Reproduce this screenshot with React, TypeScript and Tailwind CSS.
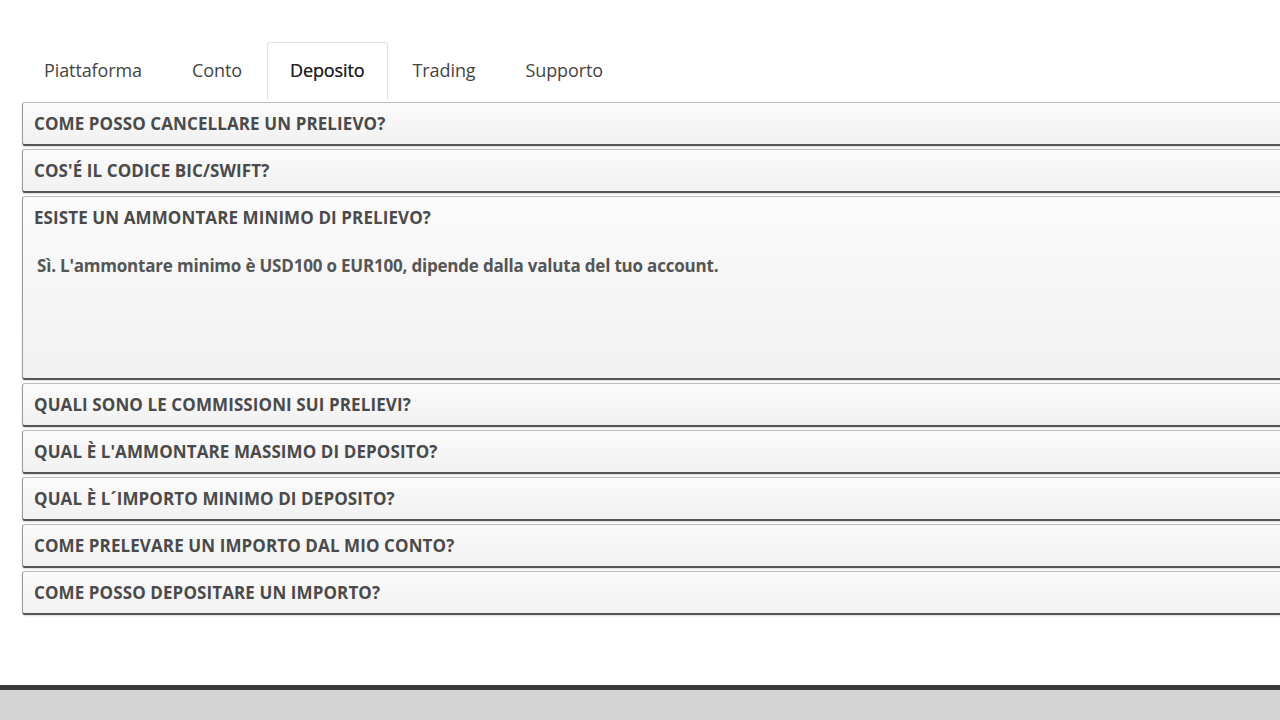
import React from "react";

const items = [
  "COME POSSO CANCELLARE UN PRELIEVO?",
  "COS'É IL CODICE BIC/SWIFT?",
  "ESISTE UN AMMONTARE MINIMO DI PRELIEVO?",
  "QUALI SONO LE COMMISSIONI SUI PRELIEVI?",
  "QUAL È L'AMMONTARE MASSIMO DI DEPOSITO?",
  "QUAL È L´IMPORTO MINIMO DI DEPOSITO?",
  "COME PRELEVARE UN IMPORTO DAL MIO CONTO?",
  "COME POSSO DEPOSITARE UN IMPORTO?",
];

const tabs = ["Piattaforma", "Conto", "Deposito", "Trading", "Supporto"];

export default function App() {
  return (
    <div
      className="w-[1280px] h-[720px] overflow-hidden bg-white flex flex-col"
      style={{ fontFamily: "'Open Sans', Lato, sans-serif" }}
    >
      <div className="flex-1 flex flex-col pt-[42px]">
        <div className="flex pl-[19px] h-[58px]">
          {tabs.map((t) => (
            <div
              key={t}
              className={
                "pb-[2px] flex items-center text-[18px] tracking-[-0.1px] " +
                (t === "Deposito"
                  ? "px-[22px] border border-b-0 border-[#e2e2e2] rounded-t-[3px] bg-white text-[#222] [text-shadow:0_0_0.6px_#333]"
                  : "px-[24px] border border-transparent text-[#444]")
              }
            >
              {t}
            </div>
          ))}
        </div>
        <div className="flex flex-col gap-[3px] ml-[22px] w-[1300px] mt-[2px]">
          {items.map((q, i) => (
            <div
              key={q}
              className={
                "border border-[#9a9a9a] border-t-[#bdbdbd] border-b-[2px] border-b-[#555] border-r-0 rounded-l-[3px] bg-gradient-to-b from-[#fbfbfb] to-[#f1f1f1] shadow-[0_1px_2px_rgba(0,0,0,0.15)]"
              }
            >
              <div className="h-[41px] flex items-center pl-[11px] text-[17px] font-bold text-[#4a4a4a] tracking-[0.1px]">
                {q}
              </div>
              {i === 2 && (
                <div className="h-[140px] pl-[14px] pt-[15px] text-[17px] font-bold text-[#555] tracking-[-0.2px]">
                  Sì. L'ammontare minimo è USD100 o EUR100, dipende dalla valuta del tuo account.
                </div>
              )}
            </div>
          ))}
        </div>
      </div>
      <div className="h-[5px] bg-[#3a3a3a]" />
      <div className="h-[30px] bg-[#d4d4d4]" />
    </div>
  );
}
